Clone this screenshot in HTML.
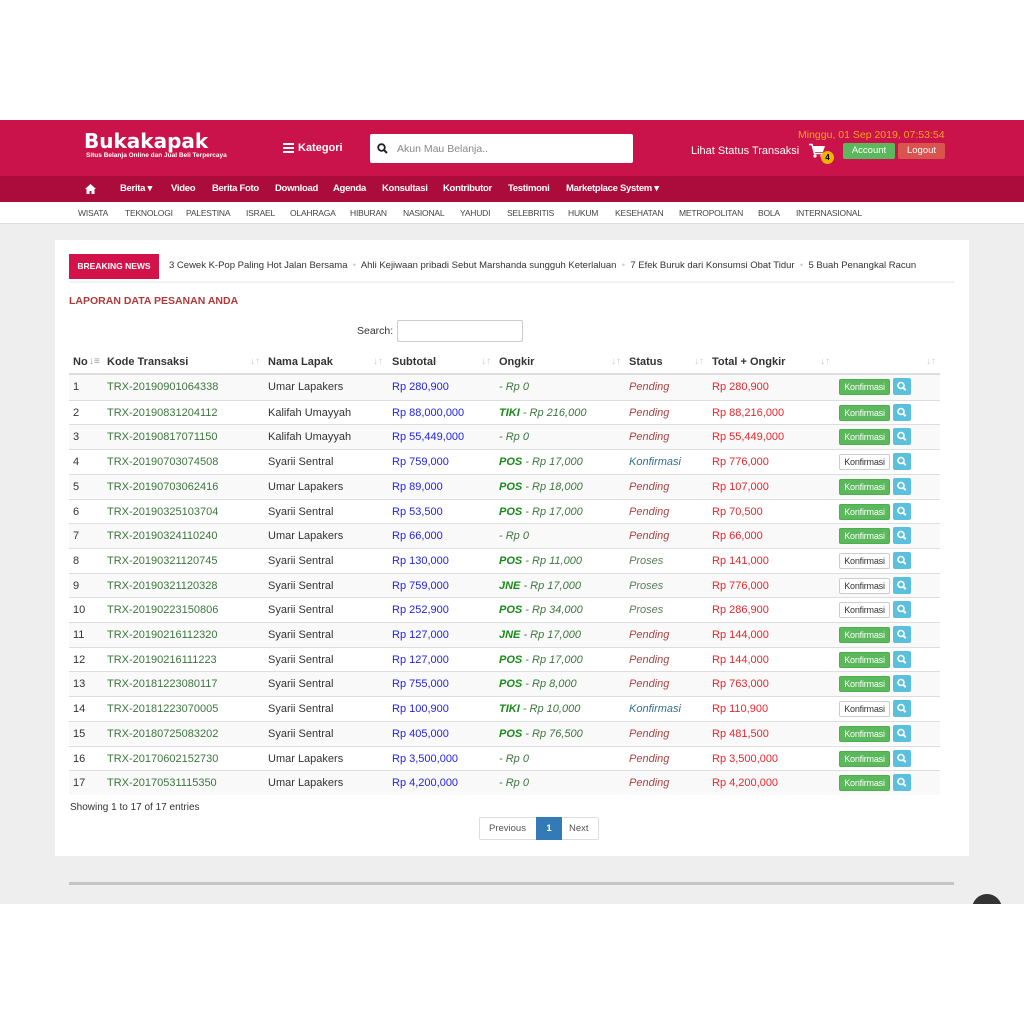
<!DOCTYPE html>
<html><head><meta charset="utf-8"><style>
*{margin:0;padding:0;box-sizing:border-box}
body{width:1024px;height:1024px;background:#fff;font-family:"Liberation Sans",sans-serif;position:relative;overflow:hidden}
.a{position:absolute}
#hdr{left:0;top:120px;width:1024px;height:56px;background:#c9134a}
#nav{left:0;top:176px;width:1024px;height:26px;background:#ab0c3b}
#sub{left:0;top:202px;width:1024px;height:22px;background:#fff;border-bottom:1px solid #ddd}
#grey{left:0;top:224px;width:1024px;height:680px;background:#efeeee}
.nv{top:183px;color:#fff;font-size:9.5px;font-weight:bold;letter-spacing:-.3px}
.sb{top:208px;color:#444;font-size:8.5px;letter-spacing:-.2px}
#card{left:55px;top:240px;width:914px;height:616px;background:#fff}
.row{position:absolute;left:69px;width:871px;height:24.7px;border-top:1px solid #ddd;font-size:11px;color:#333}
.row.odd{background:#f9f9f9}
.row span{position:absolute;top:6px;white-space:nowrap}
.c1{left:4px}.c2{left:38px;color:#3c763d}.c3{left:199px}.c4{left:323px;color:#2323e0}.c5{left:430px;color:#3c763d;font-style:italic}.c5 b{color:#1a8a1a}.c6{left:560px;font-style:italic}.c7{left:643px;color:#e5272d}
.pe{color:#a94442}.ko{color:#31708f}.pr{color:#5b7b5b}
.bk{position:absolute;left:770px;top:4px;width:51px;height:16px;border-radius:2px;font-size:9px;letter-spacing:-.2px;line-height:14px;text-align:center;background:#5cb85c;color:#fff;border:1px solid #4cae4c;overflow:hidden}
.bk.w{background:#fff;color:#333;border:1px solid #ccc}
.bs{position:absolute;left:824px;top:3px;width:18px;height:17px;border-radius:2px;background:#5bc0de}
.hd{position:absolute;top:356px;font-size:11px;font-weight:bold;color:#333}
.ar{position:absolute;top:356px;font-size:10px;color:#ccc}
</style></head><body>
<div class="a" id="hdr"></div>
<div class="a" style="left:84px;top:129px;color:#fff;font-size:20px;font-weight:bold;letter-spacing:0;font-family:'DejaVu Sans',sans-serif">Bukakapak</div>
<div class="a" style="left:86px;top:152px;color:#fff;font-size:6.5px;font-weight:bold">Situs Belanja Online dan Jual Beli Terpercaya</div>
<div class="a" style="left:283px;top:143px;width:11px;height:10px;background:repeating-linear-gradient(#fff 0 2px,transparent 2px 4px)"></div>
<div class="a" style="left:298px;top:142px;color:#fff;font-size:11px;font-weight:bold">Kategori</div>
<div class="a" style="left:370px;top:134px;width:263px;height:29px;background:#fff;border-radius:2px"></div>
<svg class="a" style="left:377px;top:143px" width="11" height="11" viewBox="0 0 11 11"><circle cx="4.5" cy="4.5" r="3.3" fill="none" stroke="#222" stroke-width="1.8"/><path d="M7 7l3 3" stroke="#222" stroke-width="2"/></svg>
<div class="a" style="left:397px;top:143px;color:#888;font-size:10.5px">Akun Mau Belanja..</div>
<div class="a" style="left:798px;top:129px;color:#f7a21b;font-size:10.5px">Minggu, 01 Sep 2019, 07:53:54</div>
<div class="a" style="left:691px;top:145px;color:#fff;font-size:11px">Lihat Status Transaksi</div>
<svg class="a" style="left:808px;top:143px" width="18" height="16" viewBox="0 0 18 16"><path d="M5 3h12l-2 6H6z" fill="#fff"/><circle cx="7" cy="13" r="1.6" fill="#fff"/><circle cx="14" cy="13" r="1.6" fill="#fff"/><path d="M1 1.5h3l2.5 9h9" stroke="#fff" stroke-width="1.5" fill="none"/></svg>
<div class="a" style="left:821px;top:151px;width:13px;height:13px;border-radius:50%;background:#f0b400;color:#000;font-size:8px;font-weight:bold;text-align:center;line-height:13px">4</div>
<div class="a" style="left:843px;top:143px;width:52px;height:16px;background:#5cb85c;color:#fff;font-size:9.5px;text-align:center;line-height:16px;border-radius:2px">Account</div>
<div class="a" style="left:898px;top:143px;width:47px;height:16px;background:#d9534f;color:#fff;font-size:9.5px;text-align:center;line-height:16px;border-radius:2px">Logout</div>
<div class="a" id="nav"></div>
<svg class="a" style="left:85px;top:184px" width="11" height="10" viewBox="0 0 11 10"><path d="M5.5 0L0 5h1.5v5h3V7h2v3h3V5H11z" fill="#fff"/></svg>
<div class="a nv" style="left:120px">Berita ▾</div>
<div class="a nv" style="left:171px">Video</div>
<div class="a nv" style="left:212px">Berita Foto</div>
<div class="a nv" style="left:275px">Download</div>
<div class="a nv" style="left:333px">Agenda</div>
<div class="a nv" style="left:382px">Konsultasi</div>
<div class="a nv" style="left:443px">Kontributor</div>
<div class="a nv" style="left:508px">Testimoni</div>
<div class="a nv" style="left:566px">Marketplace System ▾</div>
<div class="a" id="sub"></div>
<div class="a sb" style="left:78px">WISATA</div><div class="a sb" style="left:125px">TEKNOLOGI</div><div class="a sb" style="left:186px">PALESTINA</div><div class="a sb" style="left:246px">ISRAEL</div><div class="a sb" style="left:290px">OLAHRAGA</div><div class="a sb" style="left:350px">HIBURAN</div><div class="a sb" style="left:403px">NASIONAL</div><div class="a sb" style="left:460px">YAHUDI</div><div class="a sb" style="left:507px">SELEBRITIS</div><div class="a sb" style="left:568px">HUKUM</div><div class="a sb" style="left:615px">KESEHATAN</div><div class="a sb" style="left:679px">METROPOLITAN</div><div class="a sb" style="left:758px">BOLA</div><div class="a sb" style="left:796px">INTERNASIONAL</div>
<div class="a" id="grey"></div>
<div class="a" id="card"></div>
<div class="a" style="left:69px;top:254px;width:90px;height:25px;background:#d4124a;color:#fff;font-size:8.5px;font-weight:bold;text-align:center;line-height:25px">BREAKING NEWS</div>
<div class="a" style="left:169px;top:260px;font-size:9.5px;color:#333;white-space:nowrap;width:772px;overflow:hidden">3 Cewek K-Pop Paling Hot Jalan Bersama &nbsp;<span style="color:#ccc">•</span>&nbsp; Ahli Kejiwaan pribadi Sebut Marshanda sungguh Keterlaluan &nbsp;<span style="color:#ccc">•</span>&nbsp; 7 Efek Buruk dari Konsumsi Obat Tidur &nbsp;<span style="color:#ccc">•</span>&nbsp; 5 Buah Penangkal Racun</div>
<div class="a" style="left:69px;top:281px;width:885px;height:2px;background:#f2f2f2"></div>
<div class="a" style="left:69px;top:295px;color:#b03a3a;font-size:10.5px;font-weight:bold">LAPORAN DATA PESANAN ANDA</div>
<div class="a" style="left:357px;top:325px;font-size:10.5px;color:#333">Search:</div>
<div class="a" style="left:397px;top:320px;width:126px;height:22px;border:1px solid #ccc;border-radius:2px"></div>
<div class="hd" style="left:73px">No</div><div class="ar" style="left:89px;color:#999">↓≡</div>
<div class="hd" style="left:107px">Kode Transaksi</div><div class="ar" style="left:250px">↓↑</div>
<div class="hd" style="left:268px">Nama Lapak</div><div class="ar" style="left:373px">↓↑</div>
<div class="hd" style="left:392px">Subtotal</div><div class="ar" style="left:481px">↓↑</div>
<div class="hd" style="left:499px">Ongkir</div><div class="ar" style="left:611px">↓↑</div>
<div class="hd" style="left:629px">Status</div><div class="ar" style="left:694px">↓↑</div>
<div class="hd" style="left:712px">Total + Ongkir</div><div class="ar" style="left:820px">↓↑</div>
<div class="ar" style="left:926px">↓↑</div>
<div class="a" style="left:69px;top:373px;width:871px;height:2px;background:#ddd"></div>
<div id="rows"></div>
<script>
var d=[
["1","TRX-20190901064338","Umar Lapakers","280,900","","0","Pending","280,900",1],
["2","TRX-20190831204112","Kalifah Umayyah","88,000,000","TIKI","216,000","Pending","88,216,000",1],
["3","TRX-20190817071150","Kalifah Umayyah","55,449,000","","0","Pending","55,449,000",1],
["4","TRX-20190703074508","Syarii Sentral","759,000","POS","17,000","Konfirmasi","776,000",0],
["5","TRX-20190703062416","Umar Lapakers","89,000","POS","18,000","Pending","107,000",1],
["6","TRX-20190325103704","Syarii Sentral","53,500","POS","17,000","Pending","70,500",1],
["7","TRX-20190324110240","Umar Lapakers","66,000","","0","Pending","66,000",1],
["8","TRX-20190321120745","Syarii Sentral","130,000","POS","11,000","Proses","141,000",0],
["9","TRX-20190321120328","Syarii Sentral","759,000","JNE","17,000","Proses","776,000",0],
["10","TRX-20190223150806","Syarii Sentral","252,900","POS","34,000","Proses","286,900",0],
["11","TRX-20190216112320","Syarii Sentral","127,000","JNE","17,000","Pending","144,000",1],
["12","TRX-20190216111223","Syarii Sentral","127,000","POS","17,000","Pending","144,000",1],
["13","TRX-20181223080117","Syarii Sentral","755,000","POS","8,000","Pending","763,000",1],
["14","TRX-20181223070005","Syarii Sentral","100,900","TIKI","10,000","Konfirmasi","110,900",0],
["15","TRX-20180725083202","Syarii Sentral","405,000","POS","76,500","Pending","481,500",1],
["16","TRX-20170602152730","Umar Lapakers","3,500,000","","0","Pending","3,500,000",1],
["17","TRX-20170531115350","Umar Lapakers","4,200,000","","0","Pending","4,200,000",1]];
var h="",cl={Pending:"pe",Konfirmasi:"ko",Proses:"pr"};
var mag='<svg width="18" height="17" viewBox="0 0 18 17"><circle cx="8" cy="7.5" r="3" fill="none" stroke="#fff" stroke-width="1.6"/><path d="M10.2 9.7l2.5 2.5" stroke="#fff" stroke-width="2"/></svg>';
d.forEach(function(r,i){
h+='<div class="row'+(i%2==0?' odd':'')+'" style="top:'+(375+i*24.7)+'px'+(i==0?';border-top:none':'')+'"><span class="c1">'+r[0]+'</span><span class="c2">'+r[1]+'</span><span class="c3">'+r[2]+'</span><span class="c4">Rp '+r[3]+'</span><span class="c5">'+(r[4]?'<b>'+r[4]+'</b> ':'')+'- Rp '+r[5]+'</span><span class="c6 '+cl[r[6]]+'">'+r[6]+'</span><span class="c7">Rp '+r[7]+'</span><div class="bk'+(r[8]?'':' w')+'">Konfirmasi</div><div class="bs">'+mag+'</div></div>';});
document.getElementById("rows").innerHTML=h;
</script>
<div class="a" style="left:70px;top:802px;font-size:10px;color:#333">Showing 1 to 17 of 17 entries</div>
<div class="a" style="left:479px;top:817px;width:120px;height:23px;border:1px solid #ddd;border-radius:2px;font-size:9.5px;color:#555">
<span class="a" style="left:9px;top:5px">Previous</span>
<span class="a" style="left:56px;top:-1px;width:26px;height:23px;background:#337ab7;color:#fff;text-align:center;line-height:23px;font-weight:bold">1</span>
<span class="a" style="left:89px;top:5px">Next</span></div>
<div class="a" style="left:69px;top:882px;width:885px;height:3px;background:#c4c4c4"></div>
<div class="a" style="left:972px;top:894px;width:30px;height:30px;border-radius:50%;background:#333"></div>
<div class="a" style="left:0;top:904px;width:1024px;height:120px;background:#fff"></div>
</body></html>
